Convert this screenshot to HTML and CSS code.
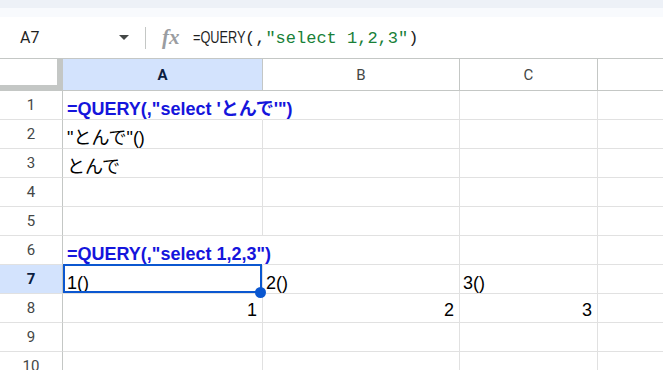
FILE: index.html
```html
<!DOCTYPE html>
<html lang="ja">
<head>
<meta charset="utf-8">
<title>Sheet</title>
<link rel="stylesheet" href="styles.css">
</head>
<body>
<div class="top"></div>
<div class="fbar">
  <div class="namebox"><span class="ref">A7</span><span class="caret"></span></div>
  <div class="sep"></div>
  <span class="fx">fx</span>
  <div class="formula"><span class="fn">=QUERY</span><span class="mono">(,</span><span class="mono str">"select 1,2,3"</span><span class="mono">)</span></div>
</div>
<div class="sheet">
  <div class="corner"></div>
  <div class="ch active">A</div>
  <div class="ch">B</div>
  <div class="ch">C</div>
  <div class="ch last"></div>

  <div class="rh">1</div>
  <div class="cell a ovf bold">=QUERY(,"select 'とんで'")</div>
  <div class="cell"></div>
  <div class="cell"></div>
  <div class="cell last"></div>

  <div class="rh">2</div>
  <div class="cell a">"とんで"()</div>
  <div class="cell"></div>
  <div class="cell"></div>
  <div class="cell last"></div>

  <div class="rh">3</div>
  <div class="cell a">とんで</div>
  <div class="cell"></div>
  <div class="cell"></div>
  <div class="cell last"></div>

  <div class="rh">4</div>
  <div class="cell a"></div>
  <div class="cell"></div>
  <div class="cell"></div>
  <div class="cell last"></div>

  <div class="rh">5</div>
  <div class="cell a"></div>
  <div class="cell"></div>
  <div class="cell"></div>
  <div class="cell last"></div>

  <div class="rh">6</div>
  <div class="cell a ovf bold">=QUERY(,"select 1,2,3")</div>
  <div class="cell"></div>
  <div class="cell"></div>
  <div class="cell last"></div>

  <div class="rh active">7</div>
  <div class="cell a selected">1()<span class="handle"></span></div>
  <div class="cell">2()</div>
  <div class="cell">3()</div>
  <div class="cell last"></div>

  <div class="rh">8</div>
  <div class="cell a num">1</div>
  <div class="cell num">2</div>
  <div class="cell num">3</div>
  <div class="cell last"></div>

  <div class="rh">9</div>
  <div class="cell a"></div>
  <div class="cell"></div>
  <div class="cell"></div>
  <div class="cell last"></div>

  <div class="rh">10</div>
  <div class="cell a"></div>
  <div class="cell"></div>
  <div class="cell"></div>
  <div class="cell last"></div>
</div>
</body>
</html>
```
FILE: styles.css
```css
html, body {
  margin: 0;
  padding: 0;
}
body {
  width: 663px;
  height: 370px;
  overflow: hidden;
  background: #ffffff;
  font-family: "Liberation Sans", Arial, "Noto Sans CJK JP", sans-serif;
  color: #000;
}
.top {
  height: 17px;
  background: linear-gradient(#edf1f7 0, #edf1f7 8px, #f8fafd 8px, #f8fafd 17px);
}
.fbar {
  height: 42px;
  box-sizing: border-box;
  border-bottom: 1px solid #c4c7c5;
  display: flex;
  align-items: center;
}
.namebox {
  width: 145px;
  box-sizing: border-box;
  padding-left: 20px;
  padding-right: 16px;
  display: flex;
  align-items: center;
}
.ref {
  font-family: Roboto, "Liberation Sans", sans-serif;
  font-size: 16px;
  color: #1f1f1f;
}
.caret {
  margin-left: auto;
  width: 0;
  height: 0;
  border-left: 5px solid transparent;
  border-right: 5px solid transparent;
  border-top: 5px solid #444746;
}
.sep {
  width: 1px;
  height: 22px;
  background: #c4c7c5;
}
.fx {
  display: inline-block;
  width: 31px;
  margin-left: 16px;
  font-family: "Liberation Serif", serif;
  font-style: italic;
  font-weight: bold;
  font-size: 21px;
  color: #9a9da1;
  line-height: 1;
}
.formula {
  font-size: 17px;
  color: #1f1f1f;
  white-space: nowrap;
  display: flex;
  align-items: baseline;
}
.fn {
  display: inline-block;
  width: 52px;
  font-family: "Liberation Sans", Arial, sans-serif;
  transform: scaleX(0.75);
  transform-origin: left center;
}
.mono {
  font-family: "Liberation Mono", monospace;
}
.str {
  color: #188038;
}
.sheet {
  display: grid;
  grid-template-columns: 63px 200px 197px 138px 65px;
  grid-template-rows: 32px repeat(10, 29px);
}
.corner {
  box-sizing: border-box;
  border-right: 6px solid #c4c7c5;
  border-bottom: 6px solid #c4c7c5;
  background: #fff;
}
.ch {
  box-sizing: border-box;
  border-right: 1px solid #c4c7c5;
  border-bottom: 1px solid #c4c7c5;
  display: flex;
  align-items: center;
  justify-content: center;
  font-family: Roboto, "Liberation Sans", sans-serif;
  font-size: 15px;
  color: #444746;
}
.ch.active {
  background: #d3e3fd;
  color: #0b1d3f;
  font-weight: bold;
}
.ch.last {
  border-right: none;
}
.rh {
  box-sizing: border-box;
  border-right: 1px solid #c4c7c5;
  border-bottom: 1px solid #e1e1e1;
  display: flex;
  align-items: center;
  justify-content: center;
  font-family: Roboto, "Liberation Sans", sans-serif;
  font-size: 15px;
  color: #444746;
}
.rh.active {
  background: #d3e3fd;
  color: #0b1d3f;
  font-weight: bold;
}
.cell {
  box-sizing: border-box;
  border-right: 1px solid #e1e1e1;
  border-bottom: 1px solid #e1e1e1;
  display: flex;
  align-items: flex-end;
  padding: 0 3px 0 3px;
  font-size: 18px;
  line-height: 20px;
  white-space: nowrap;
  min-width: 0;
  color: #000;
}
.cell.a {
  padding-left: 4px;
}
.cell.last {
  border-right: none;
}
.cell.ovf {
  border-right-color: transparent;
}
.cell.bold {
  font-weight: bold;
  color: #1515dc;
}
.cell.num {
  justify-content: flex-end;
  padding-right: 5px;
  padding-bottom: 2px;
}
.selected {
  position: relative;
}
.selected::before {
  content: "";
  position: absolute;
  left: 0;
  top: -1px;
  right: 0;
  bottom: 0;
  border: 2px solid #0b57d0;
}
.handle {
  position: absolute;
  right: -4px;
  bottom: -5px;
  width: 11px;
  height: 11px;
  border-radius: 50%;
  background: #0b57d0;
  z-index: 2;
}
```
